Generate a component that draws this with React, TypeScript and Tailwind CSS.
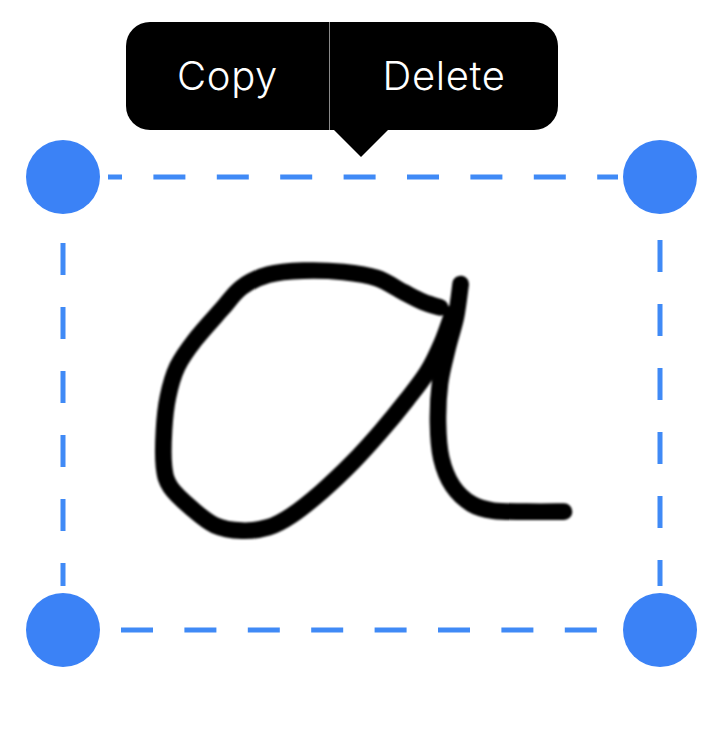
import React from 'react';

const STROKE_POINTS: [number, number][][] = [
  [
    [900, 172], [850, 156], [790, 126], [710, 84], [610, 66], [490, 62], [385, 74], [305, 112],
    [245, 178], [165, 270], [112, 350], [84, 440], [72, 540], [72, 650], [92, 712], [155, 775],
    [225, 826], [305, 842], [385, 832], [455, 796], [545, 725], [640, 635], [722, 545], [800, 450],
    [862, 366], [905, 280], [938, 190],
  ],
  [
    [962, 102], [948, 200], [924, 290], [900, 400], [894, 520], [904, 625], [938, 708], [995, 762],
    [1060, 782], [1160, 785], [1272, 785],
  ],
];

// smooth line through the sampled pen points
function toPath(points: [number, number][]) {
  let d = `M${points[0][0]} ${points[0][1]}`;
  for (let i = 0; i < points.length - 1; i++) {
    const p0 = points[i - 1] ?? points[i];
    const p1 = points[i];
    const p2 = points[i + 1];
    const p3 = points[i + 2] ?? p2;
    const c1x = p1[0] + (p2[0] - p0[0]) / 6;
    const c1y = p1[1] + (p2[1] - p0[1]) / 6;
    const c2x = p2[0] - (p3[0] - p1[0]) / 6;
    const c2y = p2[1] - (p3[1] - p1[1]) / 6;
    d += ` C${c1x} ${c1y} ${c2x} ${c2y} ${p2[0]} ${p2[1]}`;
  }
  return d;
}

function Handle({ className }: { className: string }) {
  return <div className={`absolute h-[74px] w-[74px] rounded-full bg-[#3b82f6] blur-[0.6px] ${className}`} />;
}

export default function App() {
  return (
    <div className="relative h-[730px] w-[726px] overflow-hidden bg-white font-['Inter',sans-serif]">
      <svg className="absolute left-0 top-0 h-[730px] w-[726px] blur-[0.6px]" viewBox="0 0 726 730" fill="none">
        <g stroke="#408af6" strokeWidth="5">
          <line x1="108" y1="177" x2="618" y2="177" strokeDasharray="32 31.4" strokeDashoffset="18" />
          <line x1="121" y1="630" x2="597" y2="630" strokeDasharray="32 31.4" />
          <line x1="63" y1="243" x2="63" y2="586" strokeDasharray="32 32" />
          <line x1="660" y1="240" x2="660" y2="586" strokeDasharray="32 32" />
        </g>
      </svg>

      <Handle className="left-[26px] top-[140px]" />
      <Handle className="left-[623px] top-[140px]" />
      <Handle className="left-[26px] top-[593px]" />
      <Handle className="left-[623px] top-[593px]" />

      <svg className="absolute left-[140px] top-[250px] h-[300px] w-[450px] blur-[0.9px]" viewBox="0 0 1350 900" fill="none">
        {STROKE_POINTS.map((points, i) => (
          <path key={i} d={toPath(points)} stroke="#000" strokeWidth="50" strokeLinecap="round" strokeLinejoin="round" />
        ))}
      </svg>

      <div className="absolute left-[126px] top-[22px] flex h-[108px] w-[432px] overflow-hidden rounded-[24px] bg-black text-[40px] font-[350] tracking-[0.6px] text-white">
        <div className="flex w-[204px] items-center justify-center border-r border-[#8a8a8a]">Copy</div>
        <div className="flex flex-1 items-center justify-center">Delete</div>
      </div>
      <div className="absolute left-[334px] top-[130px] h-0 w-0 border-x-[27px] border-t-[27px] border-x-transparent border-t-black" />
    </div>
  );
}
